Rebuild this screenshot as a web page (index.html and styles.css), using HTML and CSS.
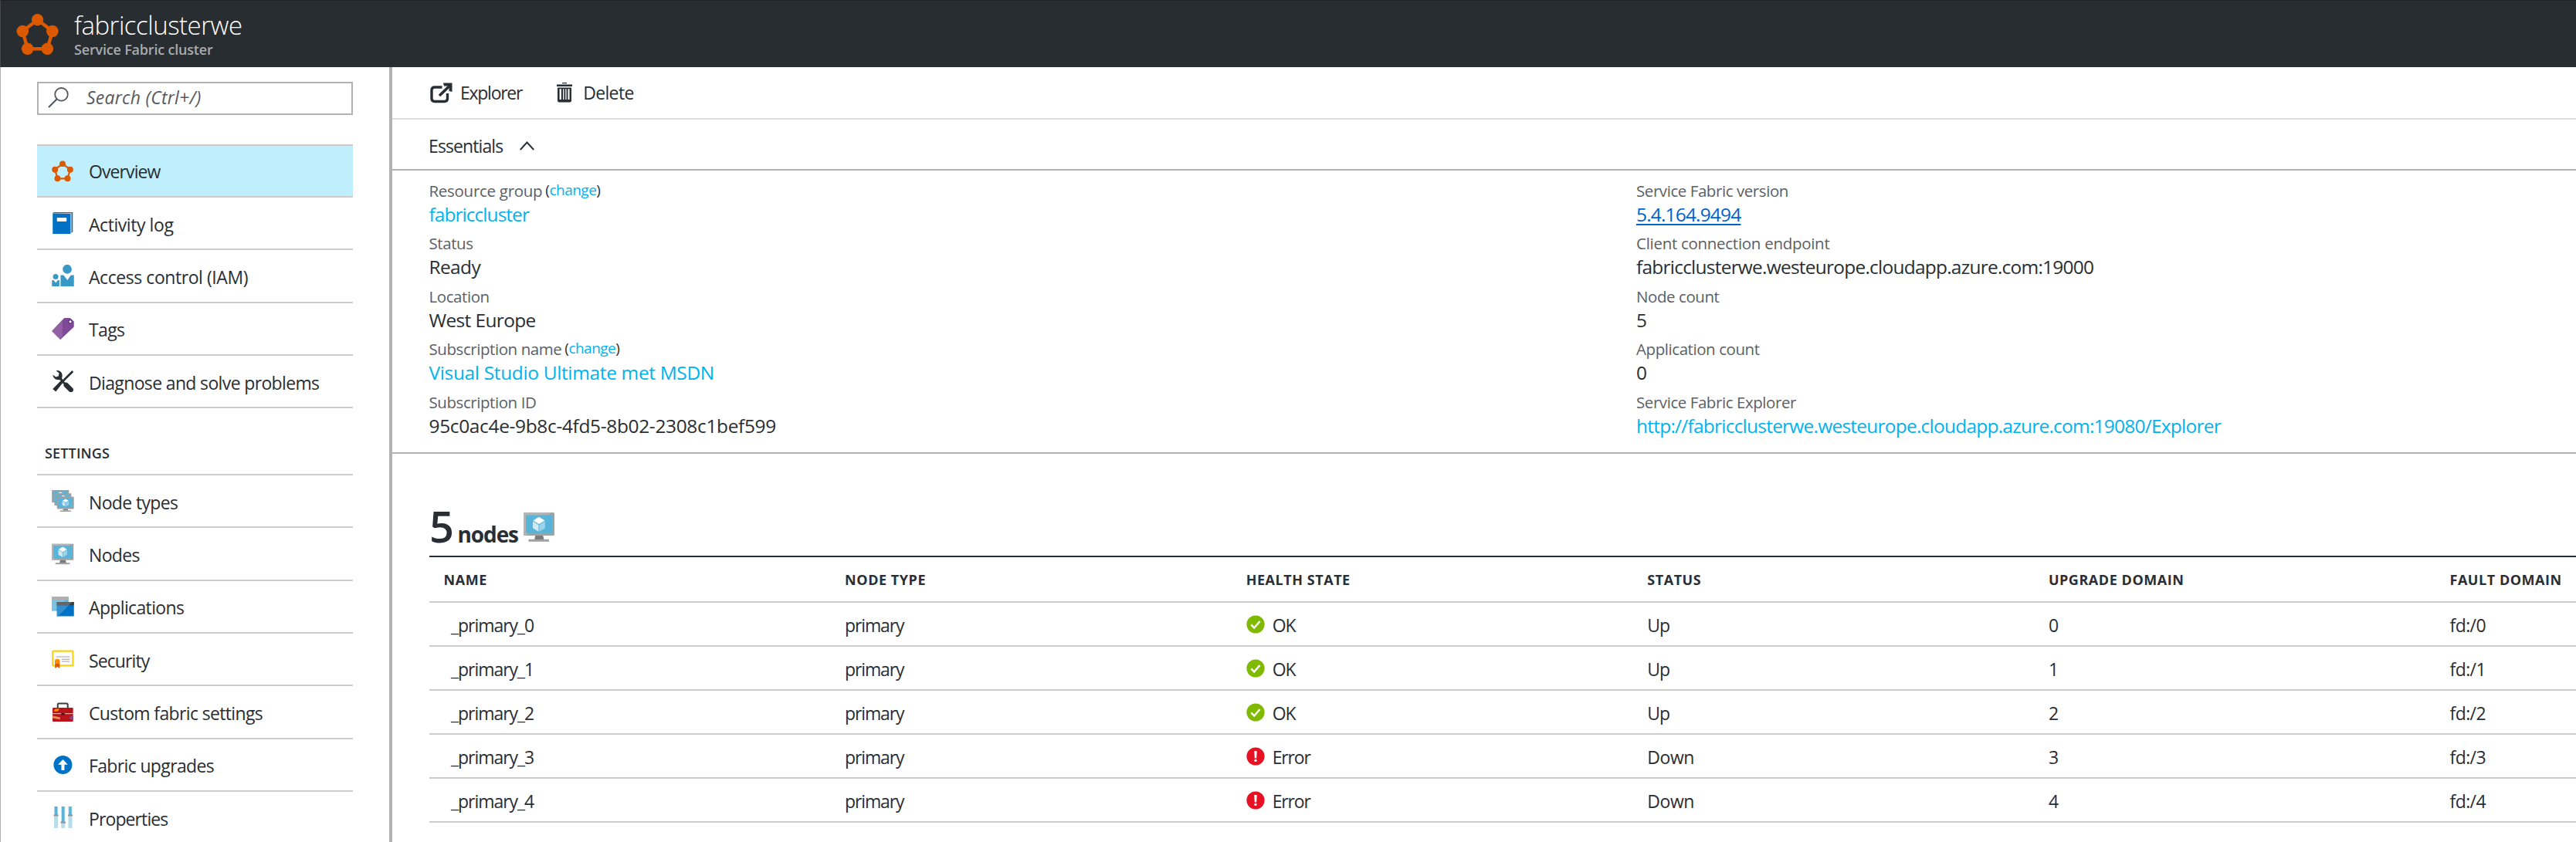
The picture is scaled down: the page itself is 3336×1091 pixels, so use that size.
FILE: index.html
```html
<!DOCTYPE html>
<html lang="en">
<head>
<meta charset="utf-8">
<title>fabricclusterwe - Service Fabric cluster</title>
<link rel="stylesheet" href="styles.css">
</head>
<body>
<svg class="defs" aria-hidden="true">
  <symbol id="cluster" viewBox="0 0 56 54">
    <path d="M27.5 7.5 46.9 22.5 40.3 45.3H14.7L8.3 22.5Z" fill="none" stroke="#dd5900" stroke-width="4.4"/>
    <g fill="#dd5900"><circle cx="27.5" cy="7.6" r="7.6"/><circle cx="46.9" cy="22.5" r="7.8"/><circle cx="40.3" cy="45.3" r="7.8"/><circle cx="14.7" cy="45.3" r="7.8"/><circle cx="8.3" cy="22.5" r="7.8"/></g>
  </symbol>
  <symbol id="monitor" viewBox="0 0 40 38">
    <path d="M15.5 29h9.5l1.5 6.5h-12.5z" fill="#7a7a7a"/>
    <rect x="6.5" y="34.8" width="26.5" height="3" fill="#a0a1a2"/>
    <rect width="40" height="30" rx="1.6" fill="#a0a1a2"/>
    <path d="M1.6 0H36L3 30H1.6A1.6 1.6 0 0 1 0 28.4V1.6A1.6 1.6 0 0 1 1.6 0Z" fill="#b3b4b5"/>
    <rect x="3" y="3.4" width="34" height="23.4" fill="#59b4d9"/>
    <path d="m20 5.8 7.6 4.6L20 15l-7.600-4.600z" fill="#fff"/>
    <path d="m12 11.400 7.500 4.600v8.700L12 20.200z" fill="#cfe9f5"/>
    <path d="m28 11.400-7.500 4.600v8.700l7.500-4.500z" fill="#9dd3ea"/>
  </symbol>
  <symbol id="ok" viewBox="0 0 24 24">
    <circle cx="12" cy="12" r="11.600" fill="#7fba00"/>
    <path d="m6.300 12.400 3.900 4.100L17.600 8" fill="none" stroke="#fff" stroke-width="2.500"/>
  </symbol>
  <symbol id="error" viewBox="0 0 24 24">
    <circle cx="12" cy="12" r="11.600" fill="#e81123"/>
    <path d="M10.300 5h3.400l-.5 9.600h-2.400z" fill="#fff"/><circle cx="12" cy="17.400" r="1.700" fill="#fff"/>
  </symbol>
</svg>

<header class="header">
  <svg class="header-icon"><use href="#cluster"/></svg>
  <div>
    <h1 class="title">fabricclusterwe</h1>
    <p class="subtitle">Service Fabric cluster</p>
  </div>
</header>

<div class="body">
  <nav class="sidebar">
    <div class="search">
      <svg class="search-icon" viewBox="0 0 27 27"><circle cx="17.500" cy="9.300" r="8.300" fill="none" stroke="#55595f" stroke-width="1.800"/><path d="M11.500 15.500 1 26" stroke="#55595f" stroke-width="2.200"/></svg>
      <span>Search (Ctrl+/)</span>
    </div>
    <ul class="menu">
      <li class="item selected"><svg class="icon" viewBox="0 0 56 54"><use href="#cluster"/></svg><span class="tight">Overview</span></li>
      <li class="item"><svg class="icon" viewBox="0 0 28 28"><path d="M1 1.500Q1 0 2.500 0H27v25.500L24.500 27V1.500z" fill="#0072c6"/><path d="M2.500 1H25.500V26L24 28V2H2.500z" fill="#c4c6c8"/><path d="M1 1.600 24 2v26H1z" fill="#0072c6"/><rect x="6.500" y="7" width="12.500" height="5" rx="1" fill="#fff"/></svg><span class="open">Activity log</span></li>
      <li class="item"><svg class="icon" viewBox="0 0 28 28"><g fill="#3999c6"><circle cx="19.800" cy="5.800" r="5.900"/><circle cx="4.800" cy="15.500" r="3.500"/><path d="M11.200 13.500H15l5 6.500 4.500-6.500H28.500V28H11.200zM0 20h2.200l2.800 3.500L7.600 20H9.600v8H0z"/></g></svg><span class="open">Access control (IAM)</span></li>
      <li class="item"><svg class="icon" viewBox="0 0 28 28"><path d="M16 0h7.500L28.500 4.500V11.500L11 28 0 17z" fill="#804998"/><path d="M13.500 2.400V25.600L11 28 0 17z" fill="#9360a8"/><circle cx="23.800" cy="4.800" r="2.200" fill="#fff" stroke="#5c2d71" stroke-width="1.200"/></svg><span>Tags</span></li>
      <li class="item"><svg class="icon" viewBox="0 0 28 28"><path d="M27 1 13.500 14.500" stroke="#292e34" stroke-width="2.600"/><path d="M18.500 19l6 6" stroke="#292e34" stroke-width="6.400" stroke-linecap="round"/><path d="M14.500 15l4 4" stroke="#292e34" stroke-width="3"/><path d="M5.500.2C9.500-.6 13.800 2.400 13.400 7.300L12.800 10.500 16 13.500 5 27.500 1 24 11.500 13.200 9.500 12C5.500 12.500 1.500 10.500 1.200 5.500L5 8.500 8.600 7.200 9.200 3.500z" fill="#292e34"/></svg><span>Diagnose and solve problems</span></li>
    </ul>
    <h2 class="section">SETTINGS</h2>
    <ul class="menu">
      <li class="item"><svg class="icon" viewBox="0 0 28 28">
        <rect x=".7" y=".7" width="20.600" height="14.600" fill="#59b4d9" stroke="#a0a1a2" stroke-width="1.600"/><path d="m8 4 3-1.500L14 4z" fill="#fff"/>
        <rect x="4" y="5" width="20.300" height="14.300" fill="#59b4d9" stroke="#a0a1a2" stroke-width="1.600"/><path d="m11.500 8.300 3-1.500 3 1.500z" fill="#fff"/>
        <rect x="7.300" y="9.300" width="20.400" height="14.400" rx=".5" fill="#59b4d9" stroke="#a0a1a2" stroke-width="1.600"/>
        <path d="m17.600 11.600 4 2.200-4 2.200-4-2.200z" fill="#fff"/><path d="m13.300 14.500 3.900 2.200v4.600l-3.900-2.200z" fill="#cfe9f5"/><path d="m22 14.500-3.900 2.200v4.600l3.900-2.200z" fill="#9dd3ea"/>
        <path d="M15 24.400h5.500l.7 2.200H14z" fill="#7a7a7a"/><path d="M10.500 26.400h14.200v1.600H10.500z" fill="#a0a1a2"/></svg><span>Node types</span></li>
      <li class="item"><svg class="icon" viewBox="0 0 40 38"><use href="#monitor"/></svg><span>Nodes</span></li>
      <li class="item"><svg class="icon" viewBox="0 0 28 28"><path d="M0 1h21.500v18.500H0z" fill="#59b4d9"/><path d="M0 1h21.500L3.500 19.500H0z" fill="#7cc3e0"/><path d="M0 1h21.500v4.500H0z" fill="#aeafb0"/><path d="M6.500 8H28.500v18.500h-22z" fill="#0072c6"/><path d="M6.500 8H26L8 26.500H6.500z" fill="#338ed1"/><path d="M6.500 8H28.500v4.200h-22z" fill="#3e3e3e"/><path d="M6.500 8H26l-4 4.200H6.500z" fill="#646566"/></svg><span>Applications</span></li>
      <li class="item"><svg class="icon" viewBox="0 0 28 28"><rect x="1" y="3.700" width="26.200" height="18.600" rx=".6" fill="#fff" stroke="#fcd116" stroke-width="2.200"/><path d="M5.500 11h17.500M12.500 14.300H23M12.500 17H23" stroke="#a0a1a2" stroke-width="1.100"/><path d="M4 18v8l3-2 3 2v-8z" fill="#dd5900"/><circle cx="7" cy="17" r="3.300" fill="#ff8c00"/></svg><span class="tight">Security</span></li>
      <li class="item"><svg class="icon" viewBox="0 0 28 28"><path d="M7.500 9V4.200q0-1.700 1.700-1.700h9.600q1.700 0 1.700 1.700V9" fill="none" stroke="#3e3e3e" stroke-width="2"/><rect x=".8" y="8" width="26.600" height="18" rx=".8" fill="#ba141a"/><path d="M.8 15h26.600v1.200H.8z" fill="#e8a0a2"/><path d="M12 15h4.500v2.500H12z" fill="#5c1013"/><path d="M2.500 12.700Q3 9.600 6 9.600H9.500Q9 12.700 6 12.700z" fill="#ff8c00"/><path d="M1 18.500l9.500 1.800v3L1 21.500z" fill="#e5905f"/><path d="M27.400 18.500Q22.600 19 22.700 21.300 23 23.300 27.400 23.400z" fill="#804998"/></svg><span>Custom fabric settings</span></li>
      <li class="item"><svg class="icon" viewBox="0 0 28 28"><circle cx="14.200" cy="14" r="12" fill="#0072c6"/><path d="M14.200 7 20.500 13.800H16.200V21h-4v-7.200H7.900z" fill="#fff"/></svg><span>Fabric upgrades</span></li>
      <li class="item"><svg class="icon" viewBox="0 0 28 28"><path d="M2.800 0h5v28h-5zM12 0h5v28h-5zM21.200 0h5v28h-5z" fill="#b8dcec"/><path d="M3.600 0h3.400v11H3.600zM12.800 0h3.400v20.500h-3.400zM22 0h3.400v11H22z" fill="#59b4d9"/><path d="M2.200 10.400h6.200v2.200H2.200zM11.400 19.600h6.200v2.200h-6.200zM20.600 10.400h6.200v2.200h-6.200z" fill="#949596"/></svg><span class="tight">Properties</span></li>
    </ul>
  </nav>

  <main class="main">
    <div class="toolbar">
      <button class="command"><svg class="explorer-icon" viewBox="0 0 30 27"><path d="M15.500 6H6Q2 6 2 10v10.500Q2 24.500 6 24.500H18.500q4 0 4-4V14" fill="none" stroke="#292e34" stroke-width="3.400"/><path d="M12 17 25 4.500" stroke="#292e34" stroke-width="3.600"/><path d="M17 .5H28.500V12L24.500 11V4.500H18z" fill="#292e34"/></svg><span class="tighter">Explorer</span></button>
      <button class="command delete"><svg class="delete-icon" viewBox="0 0 20 26"><path d="M7 0h6v1.200H7zM0 2.500h20V5H0z" fill="#292e34"/><path d="M1 6.500H19V23.500Q19 25.500 17 25.500H3Q1 25.500 1 23.500z" fill="#292e34"/><path d="M3.600 8.300H5.900V22H3.600zM8.100 8.300H9.400V22H8.100zM11.300 8.300h1.300V22h-1.300zM14.500 8.300h2V22h-2z" fill="#fff"/></svg><span>Delete</span></button>
    </div>
    <div class="essentials-bar"><span class="tight">Essentials</span><svg class="chevron" viewBox="0 0 19 12"><path d="m.8 11 8.700-9.500L18.200 11" fill="none" stroke="#292e34" stroke-width="1.900"/></svg></div>
    <div class="essentials">
      <dl class="props">
        <dt class="wide">Resource group <small>(<a>change</a>)</small></dt><dd><a class="tight">fabriccluster</a></dd>
        <dt>Status</dt><dd>Ready</dd>
        <dt>Location</dt><dd>West Europe</dd>
        <dt>Subscription name <small>(<a>change</a>)</small></dt><dd><a class="wide">Visual Studio Ultimate met MSDN</a></dd>
        <dt>Subscription ID</dt><dd class="wide">95c0ac4e-9b8c-4fd5-8b02-2308c1bef599</dd>
      </dl>
      <dl class="props">
        <dt>Service Fabric version</dt><dd><a class="version">5.4.164.9494</a></dd>
        <dt class="wide">Client connection endpoint</dt><dd class="url">fabricclusterwe.westeurope.cloudapp.azure.com:19000</dd>
        <dt>Node count</dt><dd>5</dd>
        <dt>Application count</dt><dd>0</dd>
        <dt>Service Fabric Explorer</dt><dd class="url"><a>http://fabricclusterwe.westeurope.cloudapp.azure.com:19080/Explorer</a></dd>
      </dl>
    </div>
    <section class="nodes">
      <h2 class="nodes-title"><span class="count">5</span><span class="label">nodes</span><svg class="nodes-icon"><use href="#monitor"/></svg></h2>
      <table class="grid">
        <thead><tr><th>NAME</th><th>NODE TYPE</th><th>HEALTH STATE</th><th>STATUS</th><th>UPGRADE DOMAIN</th><th>FAULT DOMAIN</th></tr></thead>
        <tbody>
          <tr><td>_primary_0</td><td>primary</td><td><div class="health"><svg><use href="#ok"/></svg>OK</div></td><td>Up</td><td>0</td><td>fd:/0</td></tr>
          <tr><td>_primary_1</td><td>primary</td><td><div class="health"><svg><use href="#ok"/></svg>OK</div></td><td>Up</td><td>1</td><td>fd:/1</td></tr>
          <tr><td>_primary_2</td><td>primary</td><td><div class="health"><svg><use href="#ok"/></svg>OK</div></td><td>Up</td><td>2</td><td>fd:/2</td></tr>
          <tr><td>_primary_3</td><td>primary</td><td><div class="health"><svg><use href="#error"/></svg>Error</div></td><td class="down">Down</td><td>3</td><td>fd:/3</td></tr>
          <tr><td>_primary_4</td><td>primary</td><td><div class="health"><svg><use href="#error"/></svg>Error</div></td><td class="down">Down</td><td>4</td><td>fd:/4</td></tr>
        </tbody>
      </table>
    </section>
  </main>
</div>
</body>
</html>
```
FILE: styles.css
```css
* { box-sizing: border-box; }
body {
  margin: 0;
  height: 1091px;
  overflow: hidden;
  display: flex;
  flex-direction: column;
  background: #fff;
  color: #292e34;
  font: 400 23px/30px "Open Sans", "Noto Sans", sans-serif;
  letter-spacing: -.028em;
}
h1, h2, p, ul, dl, dd { margin: 0; padding: 0; font-weight: 400; }
ul { list-style: none; }
svg { display: block; flex: none; }
.defs { position: absolute; width: 0; height: 0; }

.open { letter-spacing: -.019em; }
.wide { letter-spacing: -.0145em; }
.tight { letter-spacing: -.039em; }
.tighter { letter-spacing: -.055em; }

/* Blade header */
.header {
  flex: none;
  height: 87px;
  display: flex;
  padding: 17px 0 0 20px;
  gap: 19px;
  background: #282d31;
  border-top: 1px solid #1f2226;
  border-left: 1px solid #45494d;
}
.header-icon { width: 56px; height: 54px; }
.title {
  margin-top: -7px;
  font-size: 33px;
  font-weight: 300;
  line-height: 44px;
  letter-spacing: -.015em;
  color: #fff;
}
.subtitle {
  margin-top: -4px;
  font-size: 18px;
  font-weight: 600;
  line-height: 26px;
  letter-spacing: -.0105em;
  color: #a9abad;
}

.body { flex: 1; min-height: 0; display: flex; }

/* Resource menu */
.sidebar {
  flex: none;
  width: 508px;
  padding: 19px 47px 0;
  border-left: 1px solid #b2b2b2;
  border-right: 4px solid #b2b2b2;
}
.search {
  display: flex;
  align-items: center;
  width: 409px;
  height: 43px;
  padding: 0 0 3px 12px;
  gap: 23px;
  border: 2px solid #b2b2b2;
  font-style: italic;
  letter-spacing: .01em;
  color: #55595f;
}
.search-icon { width: 27px; height: 27px; }
.menu { width: 409px; border-top: 2px solid #ccc; }
.search + .menu { margin-top: 38px; }
.item {
  display: flex;
  align-items: center;
  height: 68.3px;
  padding-left: 19px;
  gap: 19.500px;
  border-bottom: 2px solid #ccc;
}
.item span { padding-top: 3px; }
.item.selected { height: 67px; background: #bfeffd; }
.item.selected span { padding-top: 1px; }
.icon { width: 28.500px; height: 28px; }
.section {
  height: 85px;
  padding: 45px 0 0 10px;
  font-size: 18px;
  font-weight: 600;
  line-height: 26px;
  letter-spacing: .0085em;
}

/* Content */
.main { flex: 1; min-width: 0; }
.toolbar {
  display: flex;
  height: 68px;
  padding-left: 49px;
  border-bottom: 2px solid #ddd;
}
.command {
  display: flex;
  align-items: center;
  padding: 0;
  border: 0;
  background: none;
  color: inherit;
  font: inherit;
  letter-spacing: inherit;
}
.explorer-icon { width: 30px; height: 27px; margin-right: 9px; }
.delete { margin-left: 45px; }
.delete-icon { width: 20px; height: 26px; margin-right: 14px; }
.essentials-bar {
  display: flex;
  align-items: center;
  height: 66px;
  padding: 3px 0 0 47px;
  border-bottom: 2px solid #b2b2b2;
}
.chevron { width: 19px; height: 12px; margin-left: 22px; }
.essentials {
  display: grid;
  grid-template-columns: 1563.500px 1fr;
  height: 367px;
  padding: 9px 0 0 47.500px;
  border-bottom: 2px solid #b2b2b2;
}
.props {
  display: grid;
  grid-template-rows: repeat(5, 33px 35.400px);
  font-size: 24.500px;
}
.props dt {
  padding-top: 1px;
  font-size: 20.500px;
  line-height: 33px;
  letter-spacing: -.021em;
  color: #5b5f65;
}
.props dt.wide { letter-spacing: -.014em; }
.props small {
  position: relative;
  top: -2px;
  margin-left: -1px;
  font-size: 19px;
  letter-spacing: -.027em;
  color: #292e34;
}
.props dd { line-height: 30px; white-space: nowrap; }
.props dd.url { letter-spacing: -.0315em; }
.props a { color: #00b3f0; }
.props a.version {
  color: #0063cc;
  letter-spacing: -.034em;
  text-decoration: underline;
  text-decoration-thickness: 2px;
  text-underline-offset: 3px;
}

/* Node list */
.nodes { padding: 75px 0 0 48px; }
.nodes-title { display: flex; height: 57px; line-height: 57px; }
.count { margin-top: -10px; font-size: 56px; font-weight: 600; letter-spacing: -.08em; }
.label { margin: 1px 0 0 9px; font-size: 28px; font-weight: 700; letter-spacing: -.04em; }
.nodes-icon { width: 40px; height: 38px; margin: 1px 0 0 7px; }
.grid {
  width: 100%;
  table-layout: fixed;
  border-spacing: 0;
  border-top: 2px solid #292e34;
  white-space: nowrap;
}
.grid th {
  width: 519.600px;
  height: 59px;
  padding: 0 0 0 18.500px;
  border-bottom: 2px solid #ccc;
  font-size: 18px;
  font-weight: 700;
  text-align: left;
  letter-spacing: .03em;
}
.grid th:last-child { width: auto; }
.grid td {
  height: 57px;
  padding: 2px 0 0 18.500px;
  border-bottom: 2px solid #ccc;
  letter-spacing: -.05em;
}
.grid td:first-child { padding-left: 28px; letter-spacing: -.045em; }
.grid td:last-child { letter-spacing: -.025em; }
.grid td.down { letter-spacing: -.02em; }
.health { display: flex; align-items: center; gap: 10px; }
.health svg { width: 24px; height: 24px; margin-top: -1px; }
```
